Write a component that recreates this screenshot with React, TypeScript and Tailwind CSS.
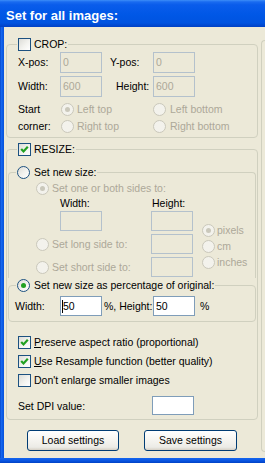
import React from "react";

const DIS = "text-[#ACA899]";

function Check({ checked }: { checked?: boolean }) {
  return (
    <span className="w-[13px] h-[13px] shrink-0 border border-[#1C5180] bg-[linear-gradient(135deg,#DCDCD7_0%,#F3F3EF_55%,#FFFFFF_100%)] flex items-center justify-center">
      {checked && (
        <svg width="11" height="11" viewBox="0 0 11 11">
          <path d="M2.2 5 L4.5 7.4 L8.8 2.8" stroke="#21A121" strokeWidth="2.2" fill="none" />
        </svg>
      )}
    </span>
  );
}

function Radio({ checked, disabled }: { checked?: boolean; disabled?: boolean }) {
  return (
    <span
      className={`w-[13px] h-[13px] shrink-0 rounded-full border flex items-center justify-center ${
        disabled
          ? "border-[#CAC8BB] bg-[#F3F2EC]"
          : "border-[#1C5180] bg-[linear-gradient(135deg,#DCDCD7_0%,#F3F3EF_55%,#FFFFFF_100%)]"
      }`}
    >
      {checked && (
        <span className={`w-[5px] h-[5px] rounded-full ${disabled ? "bg-[#CAC8BB]" : "bg-[#21A121]"}`} />
      )}
    </span>
  );
}

function RadioLabel({
  checked,
  disabled,
  children,
  gap = "gap-[3px]",
}: {
  checked?: boolean;
  disabled?: boolean;
  children: React.ReactNode;
  gap?: string;
}) {
  return (
    <div className={`flex items-center ${gap} ${disabled ? DIS : "text-black"}`}>
      <Radio checked={checked} disabled={disabled} />
      <span className="whitespace-nowrap">{children}</span>
    </div>
  );
}

function Field({
  value,
  disabled,
  className,
  caret,
}: {
  value?: string;
  disabled?: boolean;
  className: string;
  caret?: boolean;
}) {
  return (
    <div
      className={`shrink-0 border flex items-center ${caret ? "pl-[1px]" : "pl-[2px]"} ${
        disabled ? "border-[#B4C1CC] bg-[#ECE9D8] text-[#ACA899]" : "border-[#7F9DB9] bg-white text-black"
      } ${className}`}
    >
      {caret && <span className="w-px h-[13px] bg-black" />}
      {value}
    </div>
  );
}

function CheckRow({ checked, children }: { checked?: boolean; children: React.ReactNode }) {
  return (
    <div className="h-[19px] pl-[11px] flex items-center gap-[3px]">
      <Check checked={checked} />
      <span className="whitespace-nowrap">{children}</span>
    </div>
  );
}

export default function App() {
  return (
    <div className="w-[265px] h-[463px] overflow-hidden flex flex-col bg-[#ECE9D8] text-black text-[10.5px] leading-[13px] font-['Liberation_Sans',Arial,sans-serif]">
      {/* Title bar */}
      <div className="h-[27px] shrink-0 pl-[6px] pt-[7px] leading-[18px] text-[13px] font-bold text-white bg-[linear-gradient(to_bottom,#3D8EF8_0%,#1A6BF0_7%,#0A5CEB_18%,#0057E6_55%,#0053E0_85%,#0040C4_100%)]">
        Set for all images:
      </div>

      <div className="flex flex-1 min-h-0">
        {/* Left frame */}
        <div className="w-[4px] shrink-0 bg-[linear-gradient(to_right,#0544C8,#1768EE,#0A5BE6,#0852DA)]" />

        {/* Main column */}
        <div className="w-[255px] shrink-0 pl-[2px] flex flex-col">
          {/* CROP */}
          <fieldset className="mt-[10px] w-[252px] h-[101px] border border-[#D0D0BF] rounded-[4px]">
            <legend className="ml-[10px] px-[1px] h-[14px] flex items-center gap-[3px]">
              <Check />
              <span>CROP:</span>
            </legend>
            <div className="pl-[11px] mt-[1px] flex flex-col gap-[3px]">
              <div className="h-[21px] flex items-center">
                <span className="w-[42px]">X-pos:</span>
                <Field disabled value="0" className="w-[42px] h-[21px]" />
                <span className="w-[51px] pl-[8px]">Y-pos:</span>
                <Field disabled value="0" className="w-[42px] h-[21px]" />
              </div>
              <div className="h-[21px] flex items-center">
                <span className="w-[42px]">Width:</span>
                <Field disabled value="600" className="w-[42px] h-[21px]" />
                <span className="w-[51px] pl-[14px]">Height:</span>
                <Field disabled value="600" className="w-[42px] h-[21px]" />
              </div>
            </div>
            <div className="pl-[11px] mt-[4px] grid grid-cols-[43px_92px_1fr] grid-rows-[17px_17px] items-center">
              <span>Start</span>
              <RadioLabel checked disabled>Left top</RadioLabel>
              <RadioLabel disabled gap="gap-[4px]">Left bottom</RadioLabel>
              <span>corner:</span>
              <RadioLabel disabled>Right top</RadioLabel>
              <RadioLabel disabled gap="gap-[4px]">Right bottom</RadioLabel>
            </div>
          </fieldset>

          {/* RESIZE */}
          <fieldset className="mt-[4px] w-[252px] h-[278px] border border-[#D0D0BF] rounded-[4px]">
            <legend className="ml-[10px] px-[1px] h-[14px] flex items-center gap-[3px]">
              <Check checked />
              <span>RESIZE:</span>
            </legend>

            {/* Set new size */}
            <fieldset className="mt-[9px] ml-[1px] w-[248px] h-[113px] border border-b-0 border-[#D0D0BF] rounded-t-[4px]">
              <legend className="ml-[7px] px-[1px] h-[14px] flex items-center gap-[4px]">
                <Radio />
                <span>Set new size:</span>
              </legend>
              <div className="mt-[1px] h-[16px] pl-[27px] flex items-center">
                <RadioLabel checked disabled>Set one or both sides to:</RadioLabel>
              </div>
              <div className="h-[14px] pl-[51px] flex items-center text-black">
                <span className="w-[92px]">Width:</span>
                <span>Height:</span>
              </div>
              <div className="flex">
                <div className="w-[184px] flex flex-col gap-[3px] pt-[1px]">
                  <div className="h-[20px] pl-[51px] flex items-center">
                    <Field disabled className="w-[42px] h-[20px]" />
                    <span className="w-[50px]" />
                    <Field disabled className="w-[42px] h-[20px]" />
                  </div>
                  <div className="h-[20px] pl-[27px] flex items-center">
                    <div className="w-[116px]">
                      <RadioLabel disabled>Set long side to:</RadioLabel>
                    </div>
                    <Field disabled className="w-[42px] h-[20px]" />
                  </div>
                  <div className="h-[20px] pl-[27px] flex items-center">
                    <div className="w-[116px]">
                      <RadioLabel disabled>Set short side to:</RadioLabel>
                    </div>
                    <Field disabled className="w-[42px] h-[20px]" />
                  </div>
                </div>
                <div className="ml-[9px] mt-[12px] flex flex-col">
                  <div className="h-[16px] flex items-center">
                    <RadioLabel checked disabled gap="gap-[2px]">pixels</RadioLabel>
                  </div>
                  <div className="h-[16px] flex items-center">
                    <RadioLabel disabled gap="gap-[2px]">cm</RadioLabel>
                  </div>
                  <div className="h-[16px] flex items-center">
                    <RadioLabel disabled gap="gap-[2px]">inches</RadioLabel>
                  </div>
                </div>
              </div>
            </fieldset>

            {/* Percentage */}
            <fieldset className="ml-[1px] w-[248px] h-[44px] border border-[#D0D0BF] rounded-[4px]">
              <legend className="ml-[7px] px-[1px] h-[14px] flex items-center gap-[4px]">
                <Radio checked />
                <span>Set new size as percentage of original:</span>
              </legend>
              <div className="mt-[4px] h-[20px] pl-[6px] flex items-center">
                <span className="w-[45px]">Width:</span>
                <Field caret value="50" className="w-[42px] h-[20px]" />
                <span className="w-[51px] pl-[2px]">%, Height:</span>
                <Field value="50" className="w-[42px] h-[20px]" />
                <span className="ml-[5px]">%</span>
              </div>
            </fieldset>

            <div className="mt-[11px] flex flex-col">
              <CheckRow checked>
                <span className="underline underline-offset-[1px]">P</span>reserve aspect ratio (proportional)
              </CheckRow>
              <CheckRow checked>
                <span className="underline underline-offset-[1px]">U</span>se Resample function (better quality)
              </CheckRow>
              <CheckRow>Don't enlarge smaller images</CheckRow>
            </div>
            <div className="mt-[6px] h-[19px] pl-[11px] flex items-center">
              <span className="w-[134px] pt-[2px]">Set DPI value:</span>
              <Field className="w-[42px] h-[19px]" />
            </div>
          </fieldset>

          {/* Buttons */}
          <div className="mt-[10px] ml-[21px] flex gap-[25px]">
            <button className="w-[92px] h-[21px] rounded-[3px] border border-[#003C74] bg-[linear-gradient(to_bottom,#FFFFFF_0%,#F6F5F1_45%,#ECEBE6_85%,#D6D0C5_100%)] text-black leading-[13px]">
              Load settings
            </button>
            <button className="w-[93px] h-[21px] rounded-[3px] border border-[#003C74] bg-[linear-gradient(to_bottom,#FFFFFF_0%,#F6F5F1_45%,#ECEBE6_85%,#D6D0C5_100%)] text-black leading-[13px]">
              Save settings
            </button>
          </div>
        </div>

        {/* Neighbouring panel edge */}
        <div className="ml-[2px] mt-[13px] w-[6px] h-[412px] shrink-0 border-l border-t border-b border-[#D0D0BF] rounded-l-[4px]" />
      </div>

      {/* Bottom frame */}
      <div className="h-[5px] shrink-0 bg-[linear-gradient(to_bottom,#1466EE,#0A56E2,#0042C6)]" />
    </div>
  );
}
